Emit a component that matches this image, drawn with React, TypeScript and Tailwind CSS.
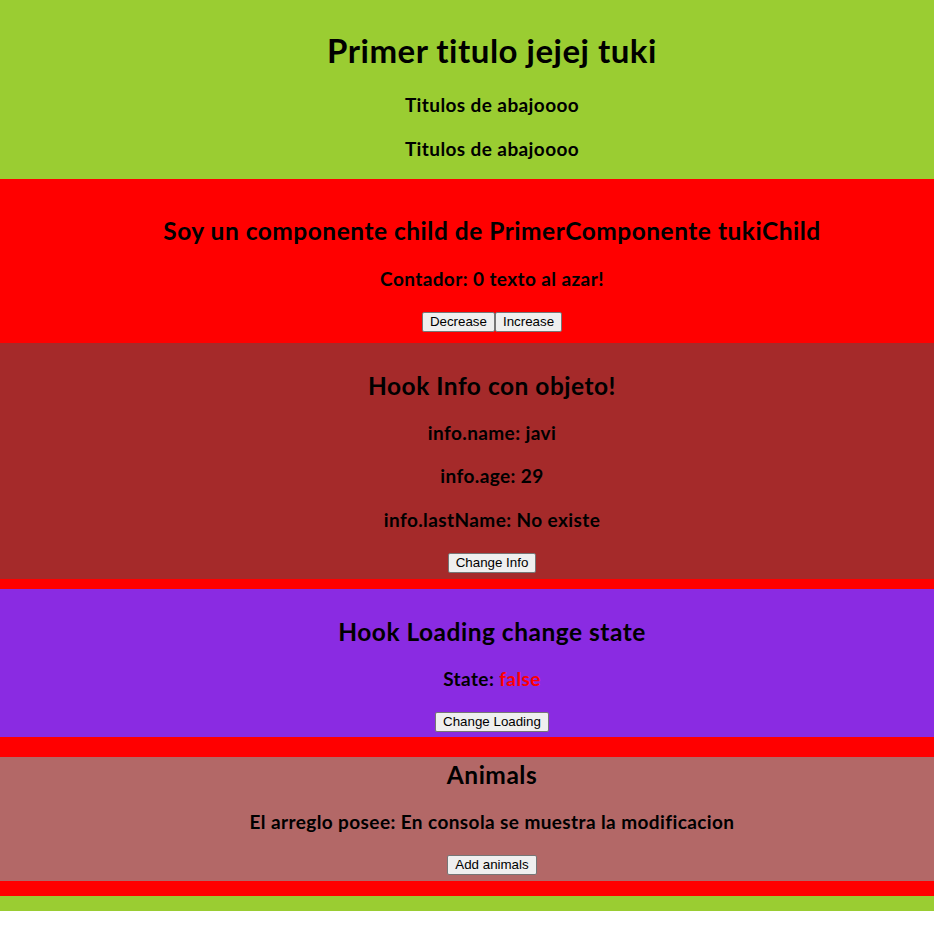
import { useState } from 'react';

const font = "font-['Lato','Noto_Sans',sans-serif] font-bold text-black text-center pl-[50px]";
const h1 = 'text-[33px] leading-[39px] tracking-[0.5px]';
const h2 = 'text-[24.5px] leading-[30px] tracking-[0.5px]';
const h3 = 'text-[19px] leading-[25px] tracking-[0.4px]';
const btn =
  "font-['Liberation_Sans',Arial,sans-serif] font-normal tracking-normal text-[13.33px] leading-[16px] h-[20px] px-[7px] bg-[#efefef] border border-[#767676] rounded-[2px] text-black";

export default function App() {
  const [count, setCount] = useState(0);
  const [info, setInfo] = useState({ name: 'javi', age: 29 });
  const [loading, setLoading] = useState(false);

  return (
    <div className="w-[934px] min-h-[925px] bg-white">
      <div className="bg-[#9acd32] pb-[15px]">
        {/* header */}
        <div className={`${font} pt-[31px]`}>
          <h1 className={h1}>Primer titulo jejej tuki</h1>
          <h3 className={`${h3} mt-[22px]`}>Titulos de abajoooo</h3>
          <h3 className={`${h3} mt-[19px]`}>Titulos de abajoooo</h3>
        </div>

        <div className="bg-[#ff0000] mt-[18px] pb-[15px]">
          {/* child */}
          <section className={`${font} pt-[37px] pb-[11px]`}>
            <h2 className={h2}>Soy un componente child de PrimerComponente tukiChild</h2>
            <h3 className={`${h3} mt-[20px]`}>Contador: {count} texto al azar!</h3>
            <div className="flex justify-center mt-[21px]">
              <button className={btn} onClick={() => setCount(count - 1)}>Decrease</button>
              <button className={btn} onClick={() => setCount(count + 1)}>Increase</button>
            </div>
          </section>

          {/* info */}
          <section className={`${font} bg-[#a52a2a] pt-[28px] pb-[6px]`}>
            <h2 className={h2}>Hook Info con objeto!</h2>
            <h3 className={`${h3} mt-[19px]`}>info.name: {info.name}</h3>
            <h3 className={`${h3} mt-[18px]`}>info.age: {info.age}</h3>
            <h3 className={`${h3} mt-[19px]`}>info.lastName: No existe</h3>
            <div className="flex justify-center mt-[21px]">
              <button className={btn} onClick={() => setInfo({ ...info, age: info.age + 1 })}>Change Info</button>
            </div>
          </section>

          {/* loading */}
          <section className={`${font} bg-[#8a2be2] mt-[10px] pt-[28px] pb-[5px]`}>
            <h2 className={h2}>Hook Loading change state</h2>
            <h3 className={`${h3} mt-[19px]`}>
              State: <span className="text-[#ff0000]">{String(loading)}</span>
            </h3>
            <div className="flex justify-center mt-[21px]">
              <button className={btn} onClick={() => setLoading(!loading)}>Change Loading</button>
            </div>
          </section>

          {/* animals */}
          <section className={`${font} bg-[#b36867] mt-[20px] pt-[3px] pb-[6px]`}>
            <h2 className={h2}>Animals</h2>
            <h3 className={`${h3} mt-[19px]`}>El arreglo posee: En consola se muestra la modificacion</h3>
            <div className="flex justify-center mt-[21px]">
              <button className={btn}>Add animals</button>
            </div>
          </section>
        </div>
      </div>
    </div>
  );
}
